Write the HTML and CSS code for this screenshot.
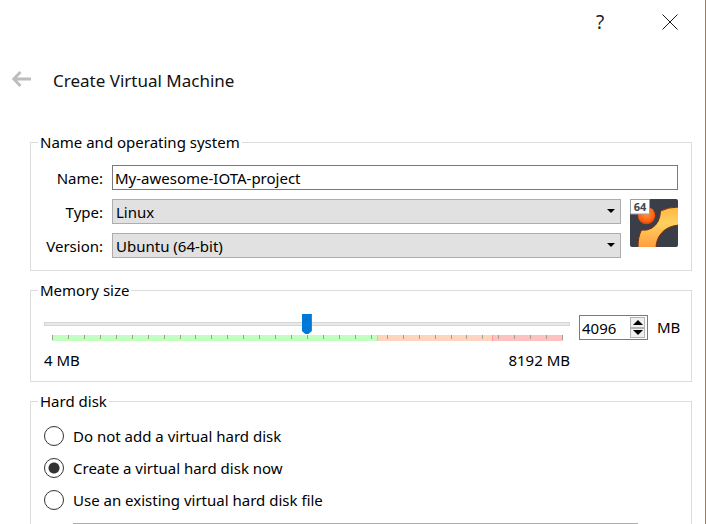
FILE: index.html
```html
<!DOCTYPE html>
<html lang="en">
<head>
<meta charset="utf-8">
<title>Create Virtual Machine</title>
<link rel="stylesheet" href="styles.css">
</head>
<body>
<main class="dialog">
  <div class="titlebar">
    <button class="titlebar-button" type="button" aria-label="Help">?</button>
    <button class="titlebar-button" type="button" aria-label="Close">
      <svg width="16" height="16" viewBox="0 0 16 16" aria-hidden="true"><path d="M.5.5l15 15M15.5.5l-15 15" stroke="#000" stroke-width=".9"/></svg>
    </button>
  </div>
  <header class="header">
    <button class="back" type="button" aria-label="Back" disabled>
      <svg width="20" height="16" viewBox="0 0 20 16" aria-hidden="true"><path d="M19 8H2M8.5 1L1.8 8l6.7 7" fill="none" stroke="#bdbdbd" stroke-width="2.8"/></svg>
    </button>
    <h1 class="title">Create Virtual Machine</h1>
  </header>
  <form class="groups">
    <fieldset class="group">
      <legend class="legend">Name and operating system</legend>
      <div class="system">
        <label class="label" for="name">Name:</label>
        <input class="field name" id="name" type="text" value="My-awesome-IOTA-project">
        <label class="label" for="type">Type:</label>
        <select class="combo" id="type"><option>Linux</option></select>
        <svg class="os-icon" viewBox="0 0 48 48" aria-hidden="true">
          <defs>
            <linearGradient id="ring" x1="0" y1="0" x2="0" y2="1"><stop offset="0" stop-color="#ffb640"/><stop offset=".4" stop-color="#ffd160"/><stop offset="1" stop-color="#ff9c3e"/></linearGradient>
            <radialGradient id="ball" cx=".5" cy=".4" r=".65"><stop offset="0" stop-color="#ff9540"/><stop offset=".65" stop-color="#ff6410"/><stop offset="1" stop-color="#c83c08"/></radialGradient>
          </defs>
          <rect width="48" height="48" rx="2" fill="#3a3e49"/>
          <circle cx="16.5" cy="16.5" r="8.7" fill="url(#ball)"/>
          <path d="M8 48C8 41 9 36 11.500 31Q17 32 22 29Q30 24 30.500 12Q38 8 49 8V26Q38 27 32 33.500Q26 40 26 49H8Z" fill="url(#ring)" stroke="#7c2d0c" stroke-width="1"/>
          <path d="M.5.500h19V15H.5z" fill="#fff" stroke="#9a9da3"/>
          <text class="badge-text" x="10" y="12" text-anchor="middle">64</text>
        </svg>
        <label class="label" for="version">Version:</label>
        <select class="combo" id="version"><option>Ubuntu (64-bit)</option></select>
      </div>
    </fieldset>

    <fieldset class="group">
      <legend class="legend">Memory size</legend>
      <div class="memory">
        <div class="slider">
          <input class="range" type="range" min="4" max="8192" value="4096" aria-label="Memory size">
          <svg class="scale" viewBox="0 0 511 6" preserveAspectRatio="none" shape-rendering="crispEdges" aria-hidden="true">
            <path d="M0 0h325v6H0z" fill="#c1ffc1"/>
            <path d="M325 0h115v6H325z" fill="#ffd4bf"/>
            <path d="M440 0h71v6h-71z" fill="#ffc0c0"/>
            <path d="M325 0h1v6h-1z" fill="#f5bc94"/>
            <path d="M440 0h1v6h-1z" fill="#ff9a9a"/>
            <path d="M.5 0v5M16.500 0v4M32.500 0v4M48.500 0v4M64.500 0v4M80.500 0v4M96.500 0v4M112.500 0v4M128.500 0v4M143.500 0v4M159.500 0v4M175.500 0v4M191.500 0v4M207.500 0v4M223.500 0v4M239.500 0v4M255.500 0v4M271.500 0v4M287.500 0v4M303.500 0v4M319.500 0v4M335.500 0v4M351.500 0v4M367.500 0v4M383.500 0v4M399.500 0v4M414.500 0v4M430.500 0v4M446.500 0v4M462.500 0v4M478.500 0v4M494.500 0v4M510.500 0v5" stroke="#a29e92"/>
          </svg>
          <div class="limits"><span>4 MB</span><span>8192 MB</span></div>
        </div>
        <div class="field spin">
          <input class="spin-value" id="memory" type="text" inputmode="numeric" value="4096">
          <div class="spin-buttons">
            <button class="spin-button" type="button" aria-label="Increase"><svg width="10" height="5" viewBox="0 0 10 5" aria-hidden="true"><path d="M5 0l5 5H0z"/></svg></button>
            <button class="spin-button" type="button" aria-label="Decrease"><svg width="10" height="5" viewBox="0 0 10 5" aria-hidden="true"><path d="M0 0h10L5 5z"/></svg></button>
          </div>
        </div>
        <label class="unit" for="memory">MB</label>
      </div>
    </fieldset>

    <fieldset class="group">
      <legend class="legend">Hard disk</legend>
      <div class="disks">
        <label class="choice"><input class="radio" type="radio" name="disk">Do not add a virtual hard disk</label>
        <label class="choice"><input class="radio" type="radio" name="disk" checked>Create a virtual hard disk now</label>
        <label class="choice"><input class="radio" type="radio" name="disk">Use an existing virtual hard disk file</label>
        <select class="combo disk-file" aria-label="Virtual hard disk file" disabled></select>
      </div>
    </fieldset>
  </form>
</main>
</body>
</html>
```
FILE: styles.css
```css
* { box-sizing: border-box; }

body {
  margin: 0;
  font: 15px/20px "Noto Sans", "Open Sans", sans-serif;
  color: #000;
  background: #fff;
}

button, input, select { margin: 0; font: inherit; color: inherit; }
svg { display: block; }

.dialog {
  height: 100vh;
  overflow: hidden;
  border-right: 1px solid #c07038;
}

.titlebar { display: flex; justify-content: flex-end; height: 44px; }
.titlebar-button {
  display: flex;
  align-items: center;
  justify-content: center;
  width: 70px;
  padding: 0;
  border: 0;
  background: none;
  color: #222;
  font-size: 19px;
}

.header { display: flex; align-items: center; height: 72px; padding-left: 12px; }
.back { padding: 0 0 2px; border: 0; background: none; }
.title { margin: 2px 0 0 21px; font-size: 17px; font-weight: 400; line-height: 24px; color: #111; }

.groups {
  display: flex;
  flex-direction: column;
  gap: 9px;
  padding: 16px 13px 0 30px;
}
.group {
  min-width: 0;
  margin: 0;
  padding: 0 13px;
  border: 1px solid #dcdcdc;
}
.legend { margin-left: -6px; padding: 0 2px; line-height: 21px; }

.system {
  display: grid;
  grid-template-columns: 59px 1fr 48px;
  grid-auto-rows: 25px;
  gap: 9px;
  align-items: center;
  padding: 12px 0;
}
.label { text-align: right; }
.field { height: 25px; border: 1px solid #7a7a7a; background: #fff; }
.name { grid-column: 2 / 4; width: 100%; padding: 0 2px; }
.combo {
  appearance: none;
  width: 100%;
  height: 25px;
  padding: 0 20px 0 3px;
  border: 1px solid #adadad;
  border-radius: 0;
  background: #e1e1e1 url("data:image/svg+xml,%3Csvg xmlns='http://www.w3.org/2000/svg' width='8' height='4'%3E%3Cpath d='M0 0h8L4 4z'/%3E%3C/svg%3E") no-repeat right 5px top 9px;
  color: #000;
  opacity: 1;
}
.os-icon { grid-column: 3; grid-row: 2 / 4; align-self: start; width: 48px; height: 48px; }
.badge-text { font: bold 11px "Noto Sans", sans-serif; fill: #41454f; }

.memory {
  display: grid;
  grid-template-columns: 1fr 69px 21px;
  column-gap: 9px;
  padding: 13px 0 11px;
}
.slider { display: flex; flex-direction: column; }
.range { appearance: none; width: 100%; height: 20px; background: none; }
.range::-webkit-slider-runnable-track {
  height: 4px;
  border: 1px solid #d6d6d6;
  background: #e7eaea;
}
.range::-webkit-slider-thumb {
  appearance: none;
  width: 10px;
  height: 20px;
  margin-top: -9px;
  background: #0078d7;
  clip-path: polygon(0 0, 100% 0, 100% 85%, 65% 100%, 35% 100%, 0 85%);
}
.scale { width: calc(100% - 15px); height: 6px; margin: 1px 7px 0 8px; }
.limits { display: flex; justify-content: space-between; margin-top: 9px; }
.spin { display: flex; margin-top: 1px; padding: 1px 2px; }
.spin-value { flex: 1; min-width: 0; padding: 0; border: 0; outline: 0; background: none; }
.spin-buttons { display: flex; flex-direction: column; width: 15px; }
.spin-button {
  display: flex;
  flex: 1;
  align-items: center;
  justify-content: center;
  padding: 0;
  border: 1px solid #b4b4b4;
  background: #f0f0f0;
}
.unit { margin-top: 3px; }

.disks { display: flex; flex-direction: column; gap: 12px; padding: 14px 0; }
.choice { display: flex; align-items: center; gap: 9px; }
.radio {
  appearance: none;
  width: 20px;
  height: 20px;
  border: 1px solid #333;
  border-radius: 50%;
  background: #fff;
}
.radio:checked { background: radial-gradient(circle, #333 5px, #fff 6px); }
.disk-file { width: auto; margin: 1px 40px 0 29px; background-color: #ccc; }
```
